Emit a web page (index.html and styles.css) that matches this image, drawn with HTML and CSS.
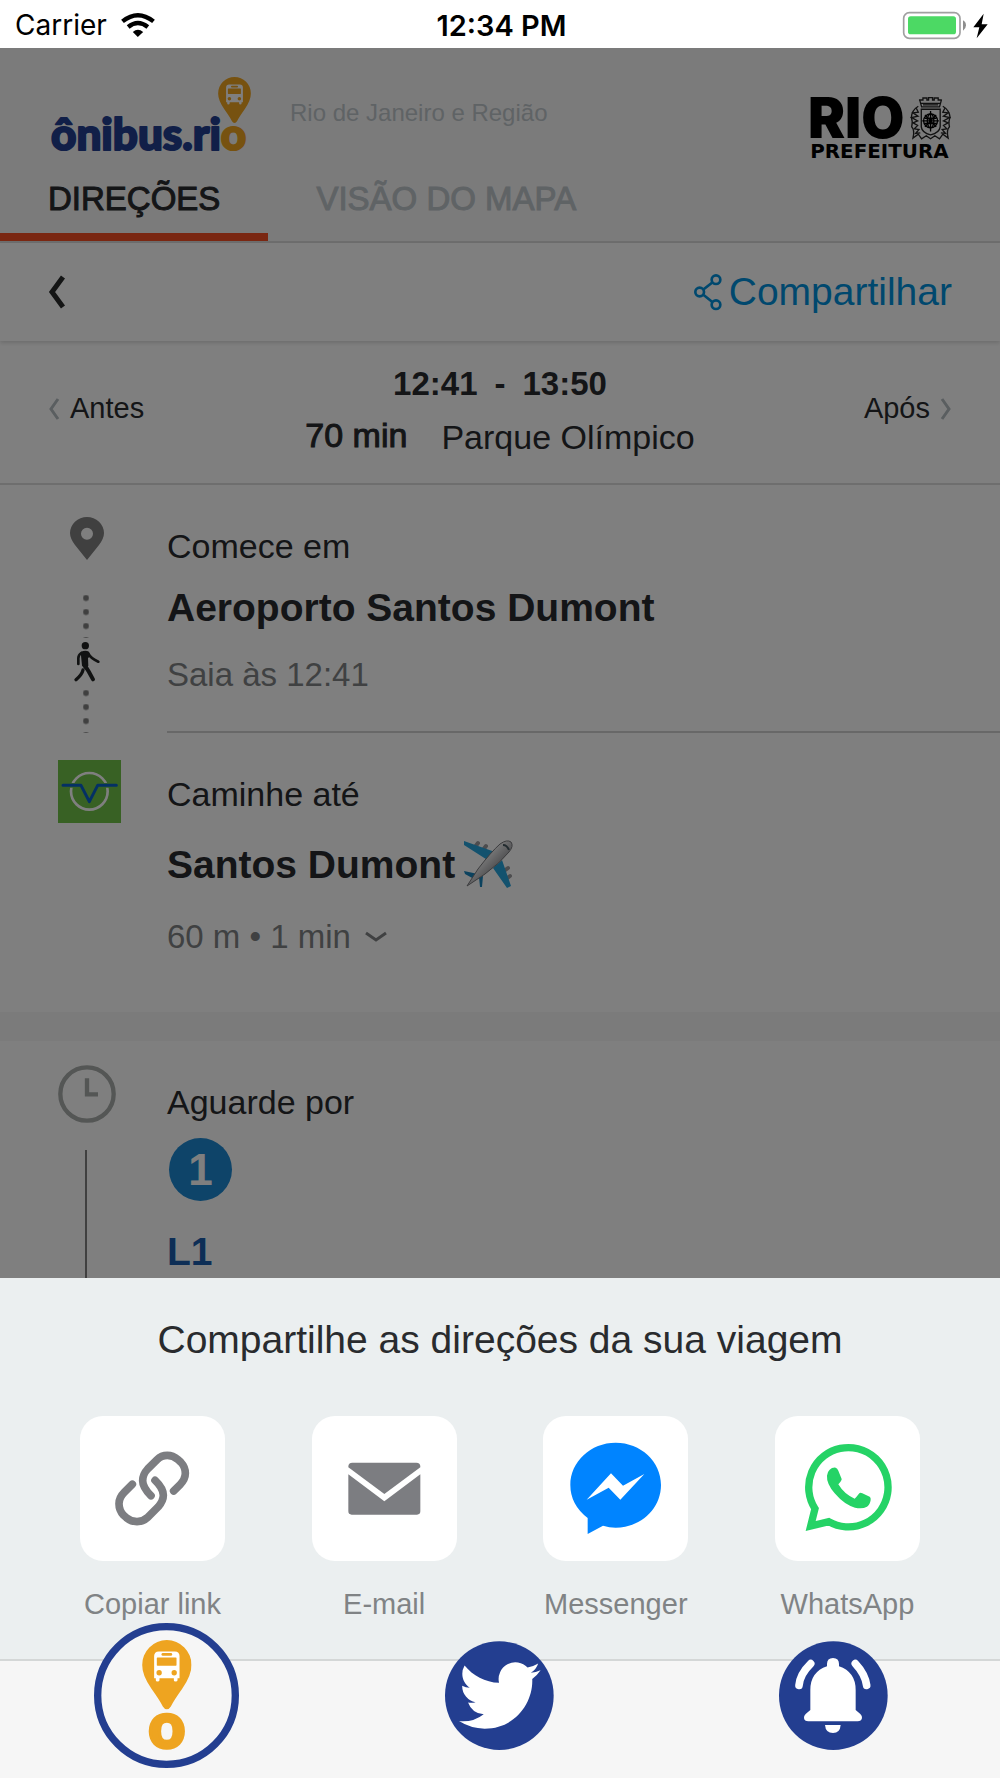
FILE: index.html
```html
<!DOCTYPE html>
<html lang="pt-BR">
	<head>
		<meta charset="UTF-8" />
		<meta name="viewport" content="width=device-width, initial-scale=1.0" />
		<title>ônibus.rio</title>
		<link rel="stylesheet" href="styles.css">
	</head>
	<body>
		<svg class="hidden" aria-hidden="true">
			<symbol id="buspin" viewBox="247 119 148 208">
				<path fill="#eea420" d="M321 327Q314 326 309 318Q300 300 275 265Q247 225 247 194A74 75 0 0 1 395 194Q395 225 367 265Q342 300 333 318Q328 326 321 327Z"/>
				<path fill="#fff" d="M283 167Q283 153 297 153H345Q359 153 359 167V233H353V239Q353 243 347 243Q342 243 342 239V233H299V239Q299 243 293 243Q288 243 288 239V233H283Z"/>
				<rect fill="#eea420" x="305" y="158" width="32" height="8" rx="4"/>
				<rect fill="#eea420" x="291" y="171" width="59" height="25" rx="2"/>
				<circle fill="#eea420" cx="298" cy="217" r="8"/>
				<circle fill="#eea420" cx="343" cy="217" r="8"/>
			</symbol>
		</svg>
		<div class="app">
			<div class="statusbar">
				<div class="carrier">
					<span>Carrier</span>
					<svg width="34" height="24" viewBox="363 36 101 72" fill="none" stroke="#000" stroke-width="13">
						<path d="M367 61Q413 24 460 61"/>
						<path d="M384 78Q413 54 443 78"/>
						<path d="M413 108L398 93Q413 80 429 93Z" fill="#000" stroke="none"/>
					</svg>
				</div>
				<div class="clock">12:34 PM</div>
				<div class="power">
					<svg width="85" height="27" viewBox="1209 32 255 81">
						<rect x="1211" y="34" width="169" height="77" rx="17" fill="#fff" stroke="#a0a0a0" stroke-width="5"/>
						<rect x="1224" y="45" width="144" height="54" rx="8" fill="#4cd964"/>
						<path d="M1389 57Q1398 62 1398 72Q1398 82 1389 88Z" fill="#8e8e8e"/>
						<path d="M1451 37L1420 78H1438L1430 111L1463 69H1445Z"/>
					</svg>
				</div>
			</div>

			<div class="screen">
				<header class="header">
					<div class="brand">
						<svg class="logo" width="202" height="78" viewBox="0 0 202 78">
							<text class="logo-text" x="-1" y="73">ônibus.ri<tspan class="logo-o">o</tspan></text>
							<use href="#buspin" x="166" y="0" width="33" height="46"/>
						</svg>
						<span class="region">Rio de Janeiro e Região</span>
						<svg class="rio" width="141" height="61" viewBox="934 288 422 184">
							<text class="rio-big" x="923" y="412">RIO</text>
							<text class="rio-small" x="930" y="472">PREFEITURA</text>
							<g fill="none" stroke="#222" stroke-width="4">
								<path d="M1260 296L1266 318H1320L1326 296M1258 297H1270V291H1282V297H1287V290H1299V297H1304V291H1316V297H1327M1264 307H1322M1270 312H1316"/>
								<path d="M1265 325H1322V378Q1320 396 1293 402Q1267 396 1265 378Z"/>
								<path d="M1256 316Q1236 328 1235 350Q1240 362 1236 378Q1246 388 1240 412L1256 400L1266 414L1280 405L1293 414L1306 405L1320 414L1330 400L1346 412Q1340 388 1350 378Q1346 362 1352 350Q1350 328 1330 316"/>
								<path d="M1250 322L1256 334L1240 336L1255 346L1236 350L1254 360L1240 366L1254 374L1244 384L1258 386L1248 398L1262 396M1336 322L1330 334L1346 336L1332 346L1350 350L1332 360L1346 366L1332 374L1342 384L1328 386L1338 398L1324 396"/>
							</g>
							<g fill="none" stroke="#000" stroke-width="4">
								<circle cx="1293" cy="360" r="21"/>
								<path d="M1293 330V392M1268 360H1318M1276 342L1310 378M1310 342L1276 378M1275 352H1311M1275 368H1311"/>
								<ellipse cx="1293" cy="360" rx="10" ry="21"/>
							</g>
						</svg>
					</div>
					<nav class="tabs">
						<button class="tab active">DIREÇÕES</button>
						<button class="tab">VISÃO DO MAPA</button>
					</nav>
				</header>

				<div class="toolbar">
					<button class="back" aria-label="Voltar">
						<svg width="17" height="34" viewBox="0 0 17 34" fill="none" stroke="#292b2b" stroke-width="5"><path d="M15 2L4 17L15 32"/></svg>
					</button>
					<button class="share">
						<svg width="28" height="36" viewBox="574 140 84 108" fill="none" stroke="#0091dc" stroke-width="8">
							<circle cx="640" cy="157" r="13"/>
							<circle cx="591" cy="194" r="13"/>
							<circle cx="640" cy="232" r="13"/>
							<path d="M603 186L628 166M603 203L628 223"/>
						</svg>
						Compartilhar
					</button>
				</div>

				<section class="summary">
					<button class="step-link">
						<svg width="12" height="22" viewBox="0 0 12 22" fill="none" stroke="#b4bcc0" stroke-width="3"><path d="M10 1L3 11L10 21"/></svg>
						Antes
					</button>
					<div class="trip">
						<div class="times"><span>12:41</span><span>-</span><span>13:50</span></div>
						<div class="details">
							<span class="duration">70 min</span>
							<span class="place">Parque Olímpico</span>
						</div>
					</div>
					<button class="step-link next">
						Após
						<svg width="12" height="22" viewBox="0 0 12 22" fill="none" stroke="#b4bcc0" stroke-width="3"><path d="M2 1L9 11L2 21"/></svg>
					</button>
				</section>

				<section class="step start">
					<div class="rail">
						<svg width="58" height="43" viewBox="174 81 174 129"><path fill="#808080" fill-rule="evenodd" d="M261 210L225 165Q210 145 210 129A51 48 0 0 1 312 129Q312 145 297 165ZM261 113A18 18 0 1 0 261 149A18 18 0 1 0 261 113Z"/></svg>
						<div class="dots"></div>
						<svg width="58" height="40" viewBox="174 459 174 120" fill="none" stroke="#222524" stroke-linecap="round">
							<circle cx="256" cy="470" r="11" fill="#222524" stroke="none"/>
							<path stroke-width="8" d="M265 494Q272 508 295 518M244 492Q235 498 235 508V525"/>
							<path fill="#222524" stroke="none" d="M242 489Q256 482 267 488Q272 500 264 508L265 530L256 542L246 530Z"/>
							<path stroke-width="12" d="M255 530L267 549L279 571"/>
							<path stroke-width="10" d="M249 543Q246 557 228 572"/>
						</svg>
						<div class="dots"></div>
					</div>
					<div class="text">
						<div class="label">Comece em</div>
						<div class="name">Aeroporto Santos Dumont</div>
						<div class="info">Saia às 12:41</div>
					</div>
				</section>

				<section class="step walk">
					<div class="rail">
						<svg width="63" height="63" viewBox="174 813 189 189" fill="none">
							<path fill="#70c248" d="M174 813H363V1002H174Z"/>
							<circle cx="268" cy="907" r="55" stroke="#fff" stroke-width="8"/>
							<path d="M189 889H243L268 938L293 889H349" stroke="#70c248" stroke-width="14"/>
							<path d="M189 889H243L268 938L293 889H349" stroke="#0860c8" stroke-width="9" stroke-linecap="round" stroke-linejoin="round"/>
						</svg>
					</div>
					<div class="text">
						<div class="label">Caminhe até</div>
						<div class="name">
							Santos Dumont
							<svg role="img" aria-label="avião" width="50" height="50" viewBox="0 0 50 50">
								<defs>
									<linearGradient id="hull" x1="0" y1="0" x2="1" y2="1">
										<stop offset=".35" stop-color="#fafafa"/>
										<stop offset=".65" stop-color="#98989c"/>
									</linearGradient>
								</defs>
								<path stroke="#9a9a9e" stroke-width="4" stroke-linecap="round" d="M14 3L11 7M22 6L19 10M44 28L40 31M46 36L42 39"/>
								<path fill="#27a4dc" d="M0 1L31 12L25 21L0 5ZM38 20L47 46L43 48L29 28Z"/>
								<path fill="#1985bd" d="M0 31L14 34L10 39L1 34ZM15 37L19 36L18 47L16 47Z"/>
								<path fill="url(#hull)" stroke="#78787c" stroke-width="1" d="M3 46L14 29Q27 12 36 4Q43 -1 47 2Q50 6 45 12Q36 23 21 34Z"/>
								<path fill="none" stroke="#45565e" stroke-width="2" d="M39 5Q43 5 45 10"/>
							</svg>
						</div>
						<div class="info">
							60 m • 1 min
							<svg width="22" height="12" viewBox="0 0 22 12" fill="none" stroke="#808385" stroke-width="3"><path d="M1 2L11 9L21 2"/></svg>
						</div>
					</div>
				</section>

				<section class="step wait">
					<div class="rail">
						<svg width="58" height="58" viewBox="174 195 174 174" fill="none" stroke="#a8acaa" stroke-width="13">
							<circle cx="261" cy="282" r="80"/>
							<path d="M261 235V283H294"/>
						</svg>
						<div class="line"></div>
					</div>
					<div class="text">
						<div class="label">Aguarde por</div>
						<div class="badge">1</div>
						<div class="route">L1</div>
					</div>
				</section>
			</div>

			<section class="sheet">
				<h2>Compartilhe as direções da sua viagem</h2>
				<div class="options">
					<button class="option">
						<span class="tile">
							<svg viewBox="240 436 435 435" fill="none" stroke="#7c7d81" stroke-width="23" stroke-linecap="round">
								<path d="M521 661L540 642Q556 626 556 608Q556 589 542 574L534 567Q519 554 502 554Q484 554 471 567L443 595Q428 611 428 630Q428 650 453 675"/>
								<path d="M397 641L373 665Q357 681 357 699Q357 719 371 734L379 741Q394 753 411 753Q429 753 442 741L475 708Q490 691 490 674Q490 653 465 629"/>
							</svg>
						</span>
						Copiar link
					</button>
					<button class="option">
						<span class="tile">
							<svg viewBox="935 436 435 435" fill="#7c7d81">
								<path d="M1044 590V588Q1044 576 1056 576H1248Q1260 576 1260 588V590L1152 670Z"/>
								<path d="M1044 611L1152 692L1260 611V722Q1260 732 1250 732H1054Q1044 732 1044 722Z"/>
							</svg>
						</span>
						E-mail
					</button>
					<button class="option">
						<span class="tile">
							<svg viewBox="130 436 435 435" fill="#0084ff">
								<path d="M264 742V790L310 765Q329 771 348 771C423 771 484 714 484 643S423 516 348 516S212 573 212 643Q212 702 264 742Z"/>
								<path fill="#fff" d="M261 687L334 608L370 645L434 610L362 687L327 651Z"/>
							</svg>
						</span>
						Messenger
					</button>
					<button class="option">
						<span class="tile">
							<svg viewBox="826 436 435 435" fill="#25d366">
								<path fill="none" stroke="#25d366" stroke-width="22" d="M946 714A119 119 0 1 1 987 753L933 766Z"/>
								<path d="M990 597Q997 590 1008 591Q1013 592 1016 600L1026 625Q1027 629 1016 641Q1034 671 1065 684Q1070 680 1079 668Q1082 665 1088 668L1110 678Q1114 680 1113 688Q1111 702 1102 708Q1088 716 1066 711Q1035 703 1005 668Q980 638 982 615Q983 603 990 597Z"/>
							</svg>
						</span>
						WhatsApp
					</button>
				</div>
			</section>

			<nav class="tabbar">
				<a href="#onibus" aria-label="ônibus.rio">
					<svg width="145" height="145" viewBox="103 68 434 434">
						<circle cx="320" cy="285" r="206" fill="#f6f6f6" stroke="#233e90" stroke-width="22"/>
						<use href="#buspin" x="247" y="119" width="148" height="208"/>
						<text class="mark-o" x="321" y="443" text-anchor="middle">o</text>
					</svg>
				</a>
				<a href="#twitter" aria-label="Twitter">
					<svg width="109" height="109" viewBox="138 123 327 327">
						<circle cx="301" cy="287" r="163" fill="#233e90"/>
						<path fill="#fff" transform="translate(180 164) scale(10.2)" d="M23.953 4.57a10 10 0 01-2.825.775 4.958 4.958 0 002.163-2.723c-.951.555-2.005.959-3.127 1.184a4.92 4.92 0 00-8.384 4.482C7.69 8.095 4.067 6.13 1.64 3.162a4.822 4.822 0 00-.666 2.475c0 1.71.87 3.213 2.188 4.096a4.904 4.904 0 01-2.228-.616v.06a4.923 4.923 0 003.946 4.827 4.996 4.996 0 01-2.212.085 4.936 4.936 0 004.604 3.417 9.867 9.867 0 01-6.102 2.105c-.39 0-.779-.023-1.17-.067a13.995 13.995 0 007.557 2.209c9.053 0 13.998-7.496 13.998-13.985 0-.21 0-.42-.015-.63A9.935 9.935 0 0024 4.59z"/>
					</svg>
				</a>
				<a href="#alertas" aria-label="Alertas">
					<svg width="109" height="109" viewBox="118 123 327 327">
						<circle cx="281" cy="287" r="163" fill="#233e90"/>
						<path fill="#fff" d="M262 192Q262 174 280 174T298 192V199Q348 216 348 270V330L362 342Q368 348 367 354Q365 364 354 364H206Q194 364 193 354Q192 348 198 342L212 330V270Q212 216 262 199Z"/>
						<path fill="#fff" d="M256 375H303Q301 399 280 399Q258 399 256 375Z"/>
						<path fill="none" stroke="#fff" stroke-width="23" stroke-linecap="round" d="M213 191Q181 222 178 256M347 191Q376 222 381 256"/>
					</svg>
				</a>
			</nav>
		</div>
	</body>
</html>
```

FILE: styles.css
```css
* {
	box-sizing: border-box;
}
body {
	margin: 0;
	background-color: #fff;
	color: #292b2e;
	font-family: "Liberation Sans", Arial, sans-serif;
}
button {
	margin: 0;
	padding: 0;
	border: 0;
	background: none;
	color: inherit;
	font-family: inherit;
	cursor: pointer;
}
svg {
	display: block;
	flex-shrink: 0;
	overflow: visible;
}
.hidden {
	position: absolute;
	width: 0;
	height: 0;
}
.app {
	display: flex;
	flex-direction: column;
	height: 100vh;
}

/* status bar */
.statusbar {
	display: grid;
	grid-template-columns: 1fr auto 1fr;
	align-items: center;
	height: 48px;
	padding: 2px 12px 0 15px;
	color: #000;
	font-family: Inter, sans-serif;
	font-size: 28px;
}
.carrier {
	display: flex;
	align-items: center;
	gap: 14px;
}
.clock {
	font-size: 29px;
	font-weight: 600;
}
.power {
	display: flex;
	justify-content: flex-end;
}

/* screen behind the share sheet */
.screen {
	position: relative;
	display: flex;
	flex-direction: column;
	flex: 1 1 0;
	min-height: 0;
	overflow: hidden;
}
.screen::after {
	content: "";
	position: absolute;
	inset: 0;
	background-color: rgba(0, 0, 0, 0.5);
}
.header {
	flex-shrink: 0;
	background-color: #f7f7f7;
	border-bottom: 2px solid #dcdcdc;
}
.brand {
	display: flex;
	align-items: flex-start;
	padding: 29px 48px 4px 52px;
}
.logo-text,
.mark-o {
	font-family: Lato, sans-serif;
	font-weight: 900;
	stroke-linejoin: round;
}
.logo-text {
	fill: #233e90;
	stroke: #233e90;
	stroke-width: 2px;
	font-size: 44px;
}
.logo-o,
.mark-o {
	fill: #eea420;
	stroke: #eea420;
}
.region {
	flex: 1;
	margin: 20px 0 0 36px;
	color: #bfc6cb;
	font-size: 24px;
	line-height: 32px;
}
.rio {
	margin-top: 20px;
}
.rio-big {
	font-family: Inter, sans-serif;
	font-size: 168px;
	font-weight: 900;
}
.rio-small {
	font-family: "DejaVu Sans", sans-serif;
	font-size: 60px;
	font-weight: bold;
}
.tabs {
	display: flex;
}
.tab {
	height: 79px;
	padding: 2px 48px 0;
	border-bottom: 8px solid transparent;
	color: #bfc6cb;
	font-size: 33px;
	-webkit-text-stroke: 1px;
}
.tab.active {
	border-color: #f44e24;
	color: #292b2e;
}
.toolbar {
	display: flex;
	flex-shrink: 0;
	align-items: center;
	justify-content: space-between;
	height: 98px;
	padding: 0 48px;
	box-shadow: 0 2px 4px rgba(0, 0, 0, 0.15);
}
.share {
	display: flex;
	align-items: center;
	gap: 7px;
	color: #0091dc;
	font-size: 39px;
}
.summary {
	display: grid;
	flex-shrink: 0;
	grid-template-columns: 1fr auto 1fr;
	align-items: center;
	height: 144px;
	padding: 0 48px 3px;
	border-bottom: 2px solid #dcdcdc;
}
.step-link {
	display: flex;
	align-items: center;
	gap: 10px;
	padding-bottom: 4px;
	font-size: 29px;
}
.next {
	justify-content: flex-end;
}
.trip {
	font-size: 34px;
	line-height: 44px;
}
.times {
	display: flex;
	justify-content: center;
	gap: 17px;
	margin-bottom: 7px;
	font-size: 33px;
	font-weight: bold;
}
.details {
	display: flex;
	gap: 34px;
}
.duration {
	-webkit-text-stroke: 1px;
}
.place {
	padding-top: 2px;
}

/* steps */
.step {
	display: grid;
	flex-shrink: 0;
	grid-template-columns: 167px 1fr;
}
.rail {
	display: flex;
	flex-direction: column;
	padding-left: 58px;
}
.start .rail {
	padding-top: 32px;
}
.dots {
	width: 6px;
	height: 43px;
	margin: 35px 0 4px 25px;
	background: radial-gradient(circle at 3px 3px, #808080 2px, transparent 4px);
	background-size: 6px 14px;
}
.dots:last-child {
	margin: 8px 0 0 25px;
}
.walk .rail {
	padding-top: 27px;
}
.text {
	padding-top: 39px;
}
.start .text {
	padding-bottom: 34px;
	border-bottom: 2px solid #d0d0d0;
}
.walk .text {
	padding-bottom: 53px;
}
.label {
	font-size: 34px;
	line-height: 44px;
}
.name {
	display: flex;
	align-items: center;
	gap: 9px;
	margin: 12px 0 17px;
	font-size: 39px;
	font-weight: bold;
	line-height: 56px;
}
.walk .name {
	margin: 21px 0 22px;
}
.info {
	display: flex;
	align-items: center;
	gap: 14px;
	color: #808385;
	font-size: 33px;
	line-height: 44px;
}
.wait {
	flex: 1 0 auto;
	border-top: 29px solid #f7f7f7;
}
.wait .rail {
	padding-top: 24px;
}
.line {
	flex: 1;
	width: 2px;
	margin: 27px 0 0 27px;
	background-color: #808080;
}
.badge {
	width: 63px;
	height: 63px;
	margin: 14px 0 23px 2px;
	border-radius: 50%;
	background-color: #1c88d2;
	color: #fff;
	font-size: 44px;
	font-weight: bold;
	line-height: 63px;
	text-align: center;
}
.route {
	color: #1a5cac;
	font-size: 39px;
	font-weight: bold;
	line-height: 56px;
}

/* share sheet */
.sheet {
	padding: 38px 80px 37px;
	background-color: #ebeff0;
}
.sheet h2 {
	margin: 0 0 52px;
	font-size: 39px;
	font-weight: normal;
	line-height: 48px;
	text-align: center;
}
.options {
	display: flex;
	justify-content: space-between;
}
.option {
	width: 145px;
	color: #808385;
	font-size: 29px;
	line-height: 36px;
	white-space: nowrap;
}
.tile {
	display: block;
	margin-bottom: 25px;
	border-radius: 23px;
	background-color: #fff;
}

/* bottom bar */
.tabbar {
	display: grid;
	grid-template-columns: repeat(3, 1fr);
	grid-template-rows: 100%;
	align-items: center;
	justify-items: center;
	height: 119px;
	padding-bottom: 48px;
	border-top: 2px solid #d4d7d7;
	background-color: #f6f6f6;
}
.mark-o {
	font-size: 190px;
	stroke-width: 10px;
}
```
